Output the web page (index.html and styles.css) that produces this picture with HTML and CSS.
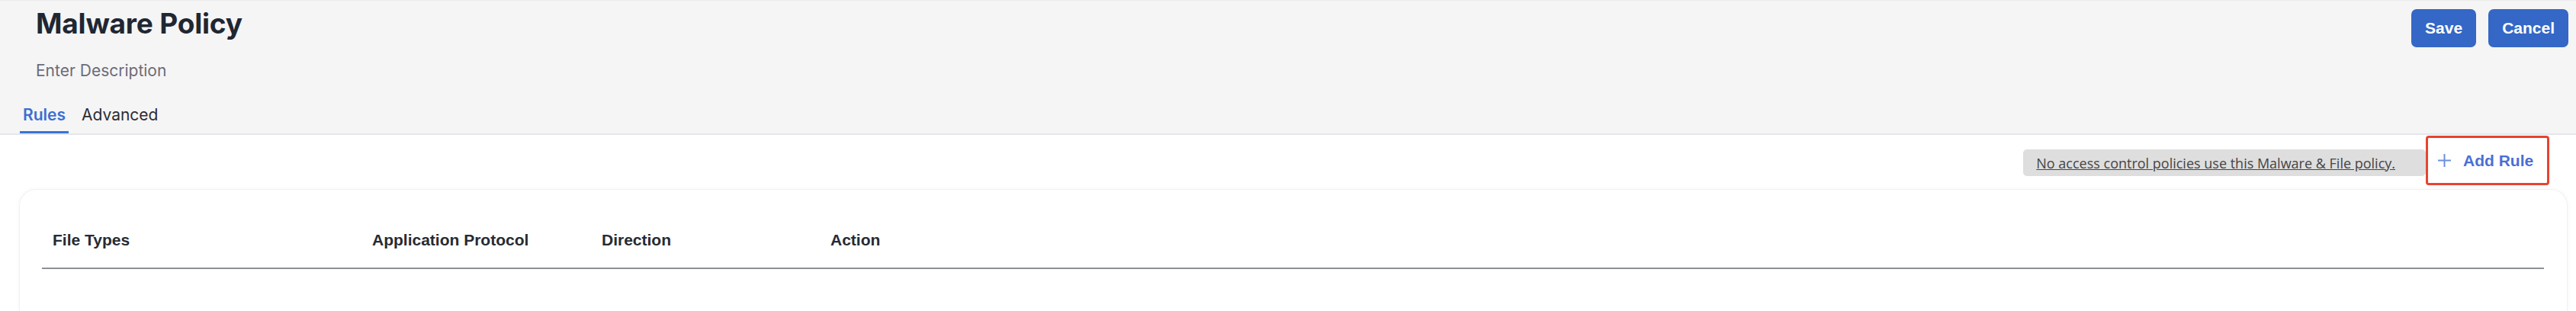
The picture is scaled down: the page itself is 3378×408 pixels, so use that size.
FILE: index.html
```html
<!DOCTYPE html>
<html lang="en">
<head>
    <meta charset="UTF-8">
    <meta name="viewport" content="width=device-width, initial-scale=1.0">
    <title>Malware Policy</title>
    <link rel="stylesheet" href="styles.css">
</head>

<body>
    <div class="page-header">
        <div class="header-top">
            <div class="title-block">
                <h1>Malware Policy</h1>
                <div class="description">Enter Description</div>
            </div>
            <div class="header-actions">
                <button type="button" class="primary-button">Save</button>
                <button type="button" class="primary-button">Cancel</button>
            </div>
        </div>

        <div class="tabs">
            <a class="tab active">Rules</a>
            <a class="tab">Advanced</a>
        </div>
    </div>

    <div class="toolbar">
        <div class="policy-note"><a>No access control policies use this Malware &amp; File policy.</a></div>
        <button type="button" class="add-rule">
            <svg width="19" height="19" viewBox="0 0 19 19">
                <path d="M9.5 1v17M1 9.5h17" stroke="#6f8fdc" stroke-width="2" fill="none"/>
            </svg>
            Add Rule
        </button>
    </div>

    <div class="card">
        <div class="rules-table">
            <div class="col col-types">File Types</div>
            <div class="col col-protocol">Application Protocol</div>
            <div class="col col-direction">Direction</div>
            <div class="col col-action">Action</div>
        </div>
    </div>
</body>
</html>
```

FILE: styles.css
```css
body {
    font-family: "Liberation Sans", Arial, sans-serif;
    margin: 0;
    background-color: #ffffff;
    overflow: hidden;
}

.page-header {
    background-color: #f5f5f5;
    border-top: 1px solid #ececec;
    border-bottom: 2px solid #e5e7ec;
}

.header-top {
    display: flex;
    justify-content: space-between;
    align-items: flex-start;
    padding: 11px 10px 0 47px;
}

h1 {
    font-family: Inter, sans-serif;
    font-size: 37px;
    line-height: 37px;
    font-weight: 700;
    color: #1f2733;
    margin: 0;
    letter-spacing: -0.2px;
}

.description {
    font-family: Inter, sans-serif;
    font-size: 21px;
    line-height: 21px;
    color: #6c6b79;
    margin-top: 33px;
}

.header-actions {
    display: flex;
    gap: 16px;
}

.primary-button {
    height: 50px;
    padding: 0 18px;
    background-color: #3467c6;
    color: white;
    font-family: "Liberation Sans", Arial, sans-serif;
    font-size: 21px;
    font-weight: bold;
    border: none;
    border-radius: 7px;
    cursor: pointer;
}

.tabs {
    display: flex;
    gap: 13px;
    padding: 37px 0 0 26px;
}

.tab {
    font-family: Inter, sans-serif;
    font-size: 21px;
    line-height: 21px;
    color: #2d2d33;
    padding: 0 4px 11px;
    border-bottom: 3px solid transparent;
}

.tab.active {
    color: #3d6fd0;
    font-weight: 600;
    border-bottom-color: #3b73d9;
}

.toolbar {
    display: flex;
    justify-content: flex-end;
    align-items: center;
    padding: 1px 35px 0 0;
}

.policy-note {
    background-color: #dedede;
    border-radius: 5px;
    height: 35px;
    padding: 0 40px 0 17px;
    margin-top: 6px;
    display: flex;
    align-items: center;
    font-family: "Open Sans", sans-serif;
    font-size: 18px;
    color: #454545;
}

.policy-note a {
    text-decoration: underline;
}

.add-rule {
    height: 65px;
    width: 162px;
    display: flex;
    align-items: center;
    gap: 15px;
    padding: 0 0 0 12px;
    background-color: white;
    border: 3px solid #e8432d;
    border-radius: 4px;
    color: #4a6fd4;
    font-family: "Liberation Sans", Arial, sans-serif;
    font-size: 21px;
    font-weight: bold;
    cursor: pointer;
}

.card {
    box-sizing: border-box;
    height: 160px;
    margin: 5px 11px 0 25px;
    background-color: white;
    border: 1px solid #f1f1f1;
    border-bottom: none;
    border-radius: 22px 22px 0 0;
    box-shadow: 0 0 6px rgba(0, 0, 0, 0.04);
    padding: 54px 30px 0 29px;
}

.rules-table {
    display: flex;
    border-bottom: 2px solid #8e9197;
}

.col {
    font-size: 21px;
    line-height: 24px;
    font-weight: bold;
    color: #262b33;
    padding: 0 14px 24px;
}

.col-types {
    width: 391px;
}

.col-protocol {
    width: 273px;
}

.col-direction {
    width: 272px;
}
```
